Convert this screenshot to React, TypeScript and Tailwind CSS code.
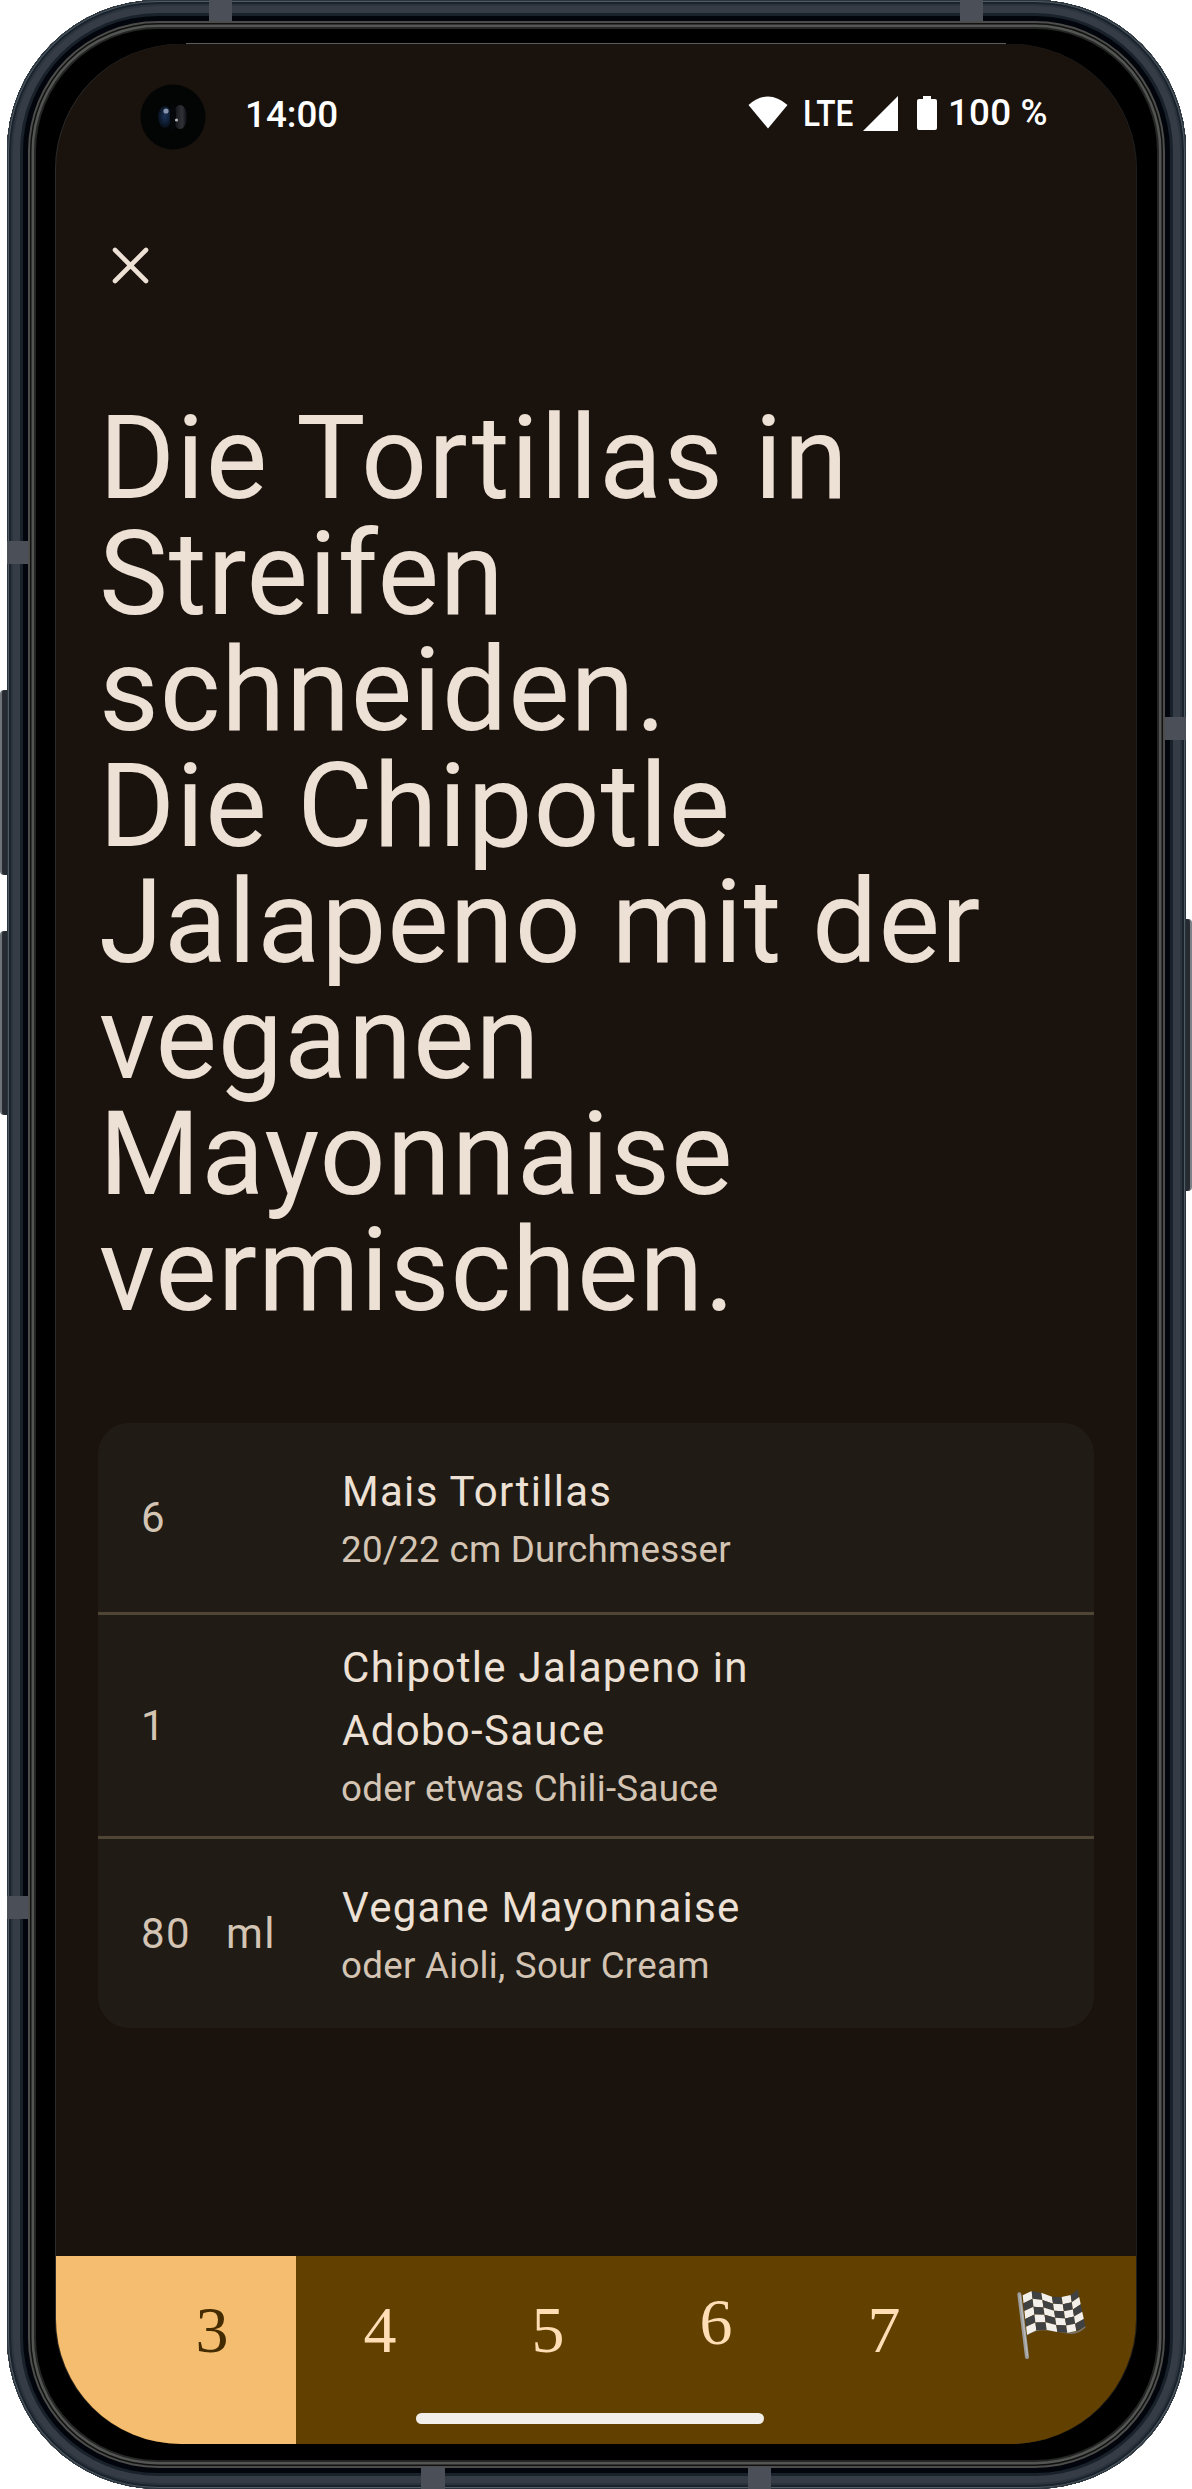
const headingLines = [
  { text: "Die Tortillas in", tracking: "tracking-[1.2px]" },
  { text: "Streifen", tracking: "tracking-[0.8px]" },
  { text: "schneiden.", tracking: "tracking-[0.8px]" },
  { text: "Die Chipotle", tracking: "tracking-[0.9px]" },
  { text: "Jalapeno mit der", tracking: "tracking-[0.95px]" },
  { text: "veganen", tracking: "tracking-[0.95px]" },
  { text: "Mayonnaise", tracking: "tracking-[1px]" },
  { text: "vermischen.", tracking: "tracking-[0.9px]" },
];

const ingredients = [
  { amount: "6", unit: "", name: "Mais Tortillas", note: "20/22 cm Durchmesser", height: "h-[189px]" },
  { amount: "1", unit: "", name: "Chipotle Jalapeno in Adobo-Sauce", note: "oder etwas Chili-Sauce", height: "h-[224px] border-t-[3px] border-[#4f4534]" },
  { amount: "80", unit: "ml", name: "Vegane Mayonnaise", note: "oder Aioli, Sour Cream", height: "h-[192px] border-t-[3px] border-[#4f4534]" },
];

const steps = [
  { n: "4", offset: "pt-[24px]" },
  { n: "5", offset: "pt-[24px]" },
  { n: "6", offset: "pt-[16px]" },
  { n: "7", offset: "pt-[24px]" },
];

const top = [[131, 104], [158, 91], [187, 96], [219, 108], [248, 109], [275, 103], [296, 87]];
const bottom = [[144, 222], [172, 209], [203, 207], [235, 214], [265, 216], [292, 211], [319, 197]];

function gridPoint(col: number, row: number) {
  const t = row / 5;
  const x = top[col][0] * (1 - t) + bottom[col][0] * t;
  const y = top[col][1] * (1 - t) + bottom[col][1] * t;
  return `${x.toFixed(1)},${y.toFixed(1)}`;
}

function FinishFlag() {
  const cells = [];
  for (let r = 0; r < 5; r++) {
    for (let c = 0; c < 6; c++) {
      const points = [gridPoint(c, r), gridPoint(c + 1, r), gridPoint(c + 1, r + 1), gridPoint(c, r + 1)].join(" ");
      const fill = (r + c) % 2 === 0 ? "#f3efea" : "#404143";
      cells.push(<polygon key={`${r}-${c}`} points={points} fill={fill} />);
    }
  }
  return (
    <svg width="70" height="70" viewBox="114 85 210 210">
      <path d="M144 222 Q172 204 203 207 T265 216 T319 197" fill="none" stroke="#77736b" strokeWidth="5" />
      {cells}
      <path d="M121 101 L144 289" stroke="#9c9c9c" strokeWidth="12" strokeLinecap="round" />
      <path d="M123 104 L145 284" stroke="#b9b9b9" strokeWidth="4" strokeLinecap="round" />
    </svg>
  );
}

function Camera() {
  return (
    <svg width="66" height="66" viewBox="0 0 66 66">
      <defs>
        <radialGradient id="lensL" cx="0.5" cy="0.45" r="0.6">
          <stop offset="0" stopColor="#1b3458" />
          <stop offset="1" stopColor="#050b14" />
        </radialGradient>
        <linearGradient id="lensR" x1="0" x2="1">
          <stop offset="0" stopColor="#0b0c10" />
          <stop offset="0.65" stopColor="#303238" />
          <stop offset="1" stopColor="#0b0c10" />
        </linearGradient>
      </defs>
      <circle cx="33" cy="33" r="32.5" fill="#030505" />
      <ellipse cx="25" cy="33" rx="7" ry="11" fill="url(#lensL)" />
      <ellipse cx="40" cy="33" rx="7" ry="12" fill="url(#lensR)" />
      <ellipse cx="33" cy="33" rx="3" ry="14" fill="#05070a" />
      <circle cx="26" cy="27" r="2.6" fill="#8793aa" />
      <circle cx="36.5" cy="36" r="1.6" fill="#b0b2b8" />
    </svg>
  );
}

export default function App() {
  return (
    <div className="relative h-[2489px] w-[1192px] overflow-hidden bg-white px-[7px] font-['Roboto',sans-serif]">
      <div className="absolute left-0 top-[690px] h-[185px] w-[9px] rounded-l-[4px] border-l-2 border-[#6e7479] bg-[#252b31]" />
      <div className="absolute left-0 top-[931px] h-[184px] w-[9px] rounded-l-[4px] border-l-2 border-[#6e7479] bg-[#252b31]" />
      <div className="absolute right-0 top-[919px] h-[272px] w-[9px] rounded-r-[4px] border-r-2 border-[#7d8288] bg-[#252b31]" />

      <div className="relative h-[2489px] w-[1179px] overflow-hidden rounded-[151px] bg-black pl-[49px] pt-[44px] shadow-[inset_0_0_0_1px_#2a343c,inset_0_0_0_2px_#505b64,inset_0_0_0_4px_#1a222c,inset_0_0_0_6px_#2b333e,inset_0_0_0_13px_#363c46,inset_0_0_0_16px_#19212b,inset_0_0_0_21px_#02060c,inset_0_0_0_23px_#4c4c4a,inset_0_0_0_24.5px_#111111,inset_0_0_0_27px_#525552,inset_0_0_0_29px_#242524]">
        <div className="absolute left-[202px] top-0 h-[21px] w-[23px] bg-[#4b5058]" />
        <div className="absolute left-[953px] top-0 h-[21px] w-[23px] bg-[#4b5058]" />
        <div className="absolute bottom-0 left-[414px] h-[22px] w-[24px] bg-[#4b5058]" />
        <div className="absolute bottom-0 left-[741px] h-[22px] w-[23px] bg-[#4b5058]" />
        <div className="absolute left-0 top-[541px] h-[23px] w-[21px] bg-[#4b5058]" />
        <div className="absolute left-0 top-[1896px] h-[23px] w-[21px] bg-[#4b5058]" />
        <div className="absolute right-0 top-[717px] h-[23px] w-[21px] bg-[#4b5058]" />
        <div className="absolute left-[179px] top-[43px] h-[2px] w-[820px] bg-[#5c5c5c]" />

        <div className="relative flex h-[2400px] w-[1080px] flex-col overflow-hidden rounded-[125px] bg-[#1a120c] shadow-[-1px_0_0_0_#2b2b2b,1px_0_0_0_#1f1f1f]">
          <header className="flex h-[146px] shrink-0 items-center pl-[84px] text-[36.75px] font-medium text-white">
            <Camera />
            <span className="ml-[39px] w-[503px] pb-[4px]">14:00</span>
            <svg className="mb-[10px]" width="40" height="33" viewBox="0 0 40 33">
              <path d="M20 32.5 L0.5 9 Q20 -8 39.5 9 Z" fill="white" />
            </svg>
            <span className="ml-[15px] w-[60px] origin-left scale-x-[0.86] pb-[7px]">LTE</span>
            <svg className="mb-[8px]" width="35" height="35" viewBox="0 0 36 36">
              <path d="M0 36 L36 0 V36 Z" fill="white" />
            </svg>
            <svg className="mb-[8px] ml-[19px]" width="20" height="34" viewBox="0 0 20 34">
              <path d="M6 0 H14 V3 H18 Q20 3 20 5 V32 Q20 34 18 34 H2 Q0 34 0 32 V5 Q0 3 2 3 H6 Z" fill="white" />
            </svg>
            <span className="ml-[11px] whitespace-nowrap pb-[9px] tracking-[0.2px]">100 %</span>
          </header>

          <button className="ml-[56px] mt-[57px] h-[37px] w-[37px]">
            <svg width="37" height="37" viewBox="0 0 37 37">
              <path d="M3 3 L34 34 M34 3 L3 34" stroke="#ede0d4" strokeWidth="4.6" strokeLinecap="round" />
            </svg>
          </button>

          <h1 className="ml-[43px] mt-[116px] h-[928px] whitespace-nowrap text-[116px] font-normal leading-[116px] text-[#ede0d4]">
            {headingLines.map((line) => (
              <span key={line.text} className={`block ${line.tracking}`}>{line.text}</span>
            ))}
          </h1>

          <section className="ml-[42px] mt-[95px] w-[996px] overflow-hidden rounded-[31px] bg-[#201b14] text-[42px] leading-[63px] tracking-[1.3px]">
            {ingredients.map((item) => (
              <div key={item.name} className={`flex items-center pl-[43px] ${item.height}`}>
                <span className="w-[85px] text-[#d3c4b4]">{item.amount}</span>
                <span className="w-[116px] text-[#d3c4b4]">{item.unit}</span>
                <div className="w-[480px]">
                  <p className="text-[#ede0d4]">{item.name}</p>
                  <p className="relative -left-px top-px text-[36.75px] leading-[52.5px] tracking-[0.25px] text-[#d3c4b4]">{item.note}</p>
                </div>
              </div>
            ))}
          </section>

          <nav className="relative mt-auto flex h-[188px] shrink-0 bg-[#624000] font-['Liberation_Serif',serif] text-[66px] leading-[100px] text-[#ffddb5]">
            <div className="w-[240px] bg-[#f4bd6f] pl-[72px] pt-[24px] text-center text-[#452b00]">3</div>
            {steps.map((step) => (
              <div key={step.n} className={`w-[168px] text-center ${step.offset}`}>{step.n}</div>
            ))}
            <div className="flex w-[168px] justify-center pt-[33px]">
              <FinishFlag />
            </div>
            <div className="absolute left-[360px] top-[157px] h-[11px] w-[348px] rounded-full bg-[#f2efea]" />
          </nav>
        </div>
      </div>
    </div>
  );
}
